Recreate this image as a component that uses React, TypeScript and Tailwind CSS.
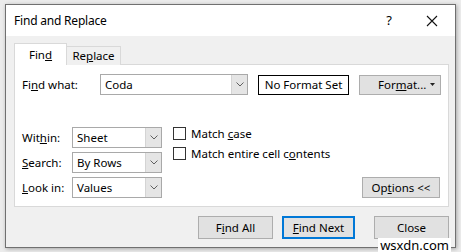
import React from 'react';

function Chevron() {
  return (
    <svg width="8" height="5" viewBox="0 0 8 5" fill="none">
      <path d="M0.5 0.5 L4 4 L7.5 0.5" stroke="#606060" strokeWidth="1" />
    </svg>
  );
}

function Combo({ value, width }: { value: string; width: string }) {
  return (
    <div className={`${width} h-[21px] flex border border-[#a9a9a9] bg-white`}>
      <div className="flex-1 flex items-center pl-[4px] leading-none">{value}</div>
      <div className="w-[16px] flex items-center justify-center bg-[#e5e5e5] border-l border-[#d4d4d4]">
        <Chevron />
      </div>
    </div>
  );
}

function Checkbox({ children }: { children: React.ReactNode }) {
  return (
    <div className="flex items-center gap-[5px] h-[13px]">
      <div className="w-[13px] h-[13px] border border-[#333] bg-white" />
      <span className="leading-none">{children}</span>
    </div>
  );
}

export default function App() {
  return (
    <div
      className="w-[461px] h-[252px] bg-[#ececec] pt-[4px] pl-[5px] relative overflow-hidden text-[11.5px] text-black"
      style={{ fontFamily: '"Noto Sans", "Segoe UI", sans-serif' }}
    >
      <div className="w-[451px] h-[244px] border border-[#707070] bg-[#f0f0f0] shadow-[1px_1px_4px_rgba(0,0,0,0.3)]">
        {/* Title bar */}
        <div className="h-[31px] bg-white flex items-center pl-[8px]">
          <span className="text-[12px] tracking-[-0.2px]">Find and Replace</span>
          <span className="ml-auto mr-[34px] text-[13px]">?</span>
          <svg width="12" height="12" viewBox="0 0 12 12" className="mr-[17px]">
            <path d="M1 1 L11 11 M11 1 L1 11" stroke="#111" strokeWidth="1.1" />
          </svg>
        </div>

        <div className="pl-[8px] pt-[7px]">
          {/* Tabs */}
          <div className="flex items-end h-[22px]">
            <div className="w-[53px] h-[22px] bg-white border border-b-0 border-[#d9d9d9] flex items-center justify-center relative z-10">
              Fin<span className="underline">d</span>
            </div>
            <div className="w-[54px] h-[19px] bg-[#f0f0f0] border border-l-0 border-b-0 border-[#d9d9d9] flex items-center justify-center">
              Re<span className="underline">p</span>lace
            </div>
          </div>

          {/* Panel */}
          <div className="w-[435px] h-[143px] -mt-px border border-[#d9d9d9] bg-white px-[7px] pt-[9px]">
            <div className="flex items-center h-[21px]">
              <div className="w-[78px]">
                Fi<span className="underline">n</span>d what:
              </div>
              <Combo value="Coda" width="w-[148px]" />
              <div className="ml-[10px] w-[91px] h-[20px] border border-black flex items-center justify-center">
                No Format Set
              </div>
              <div className="ml-[10px] w-[82px] h-[20px] border border-[#adadad] bg-[#e1e1e1] flex items-center pl-[18px]">
                <span>
                  For<span className="underline">m</span>at...
                </span>
                <svg width="5" height="3" viewBox="0 0 5 3" className="ml-auto mr-[5px]">
                  <path d="M0 0 H5 L2.5 3 Z" fill="#222" />
                </svg>
              </div>
            </div>

            <div className="flex mt-[32px]">
              <div className="flex flex-col gap-[4px]">
                <div className="flex items-center">
                  <div className="w-[50px]">
                    Wit<span className="underline">h</span>in:
                  </div>
                  <Combo value="Sheet" width="w-[90px]" />
                </div>
                <div className="flex items-center">
                  <div className="w-[50px]">
                    <span className="underline">S</span>earch:
                  </div>
                  <Combo value="By Rows" width="w-[90px]" />
                </div>
                <div className="flex items-center">
                  <div className="w-[50px]">
                    <span className="underline">L</span>ook in:
                  </div>
                  <Combo value="Values" width="w-[90px]" />
                </div>
              </div>

              <div className="ml-[11px] flex flex-col gap-[7px]">
                <Checkbox>
                  Match <span className="underline">c</span>ase
                </Checkbox>
                <Checkbox>
                  Match entire cell c<span className="underline">o</span>ntents
                </Checkbox>
              </div>

              <div className="ml-auto self-end mr-[1px] w-[78px] h-[21px] border border-[#adadad] bg-[#e1e1e1] flex items-center justify-center">
                Op<span className="underline">t</span>ions &lt;&lt;
              </div>
            </div>
          </div>

          {/* Buttons */}
          <div className="w-[435px] flex justify-end mt-[9px]">
            <div className="w-[75px] h-[23px] border border-[#adadad] bg-[#e1e1e1] flex items-center justify-center">
              F<span className="underline">i</span>nd All
            </div>
            <div className="ml-[9px] w-[73px] h-[23px] border-2 border-[#0078d7] bg-[#e1e1e1] flex items-center justify-center">
              <span className="underline">F</span>ind Next
            </div>
            <div className="ml-[19px] w-[75px] h-[23px] border border-[#adadad] bg-[#e1e1e1] flex items-center justify-center">
              Close
            </div>
          </div>
        </div>
      </div>

      <div className="absolute right-[10px] bottom-0 bg-white px-[2px] h-[14px] flex items-center text-[13px] leading-none">
        wsxdn.com
      </div>
    </div>
  );
}
